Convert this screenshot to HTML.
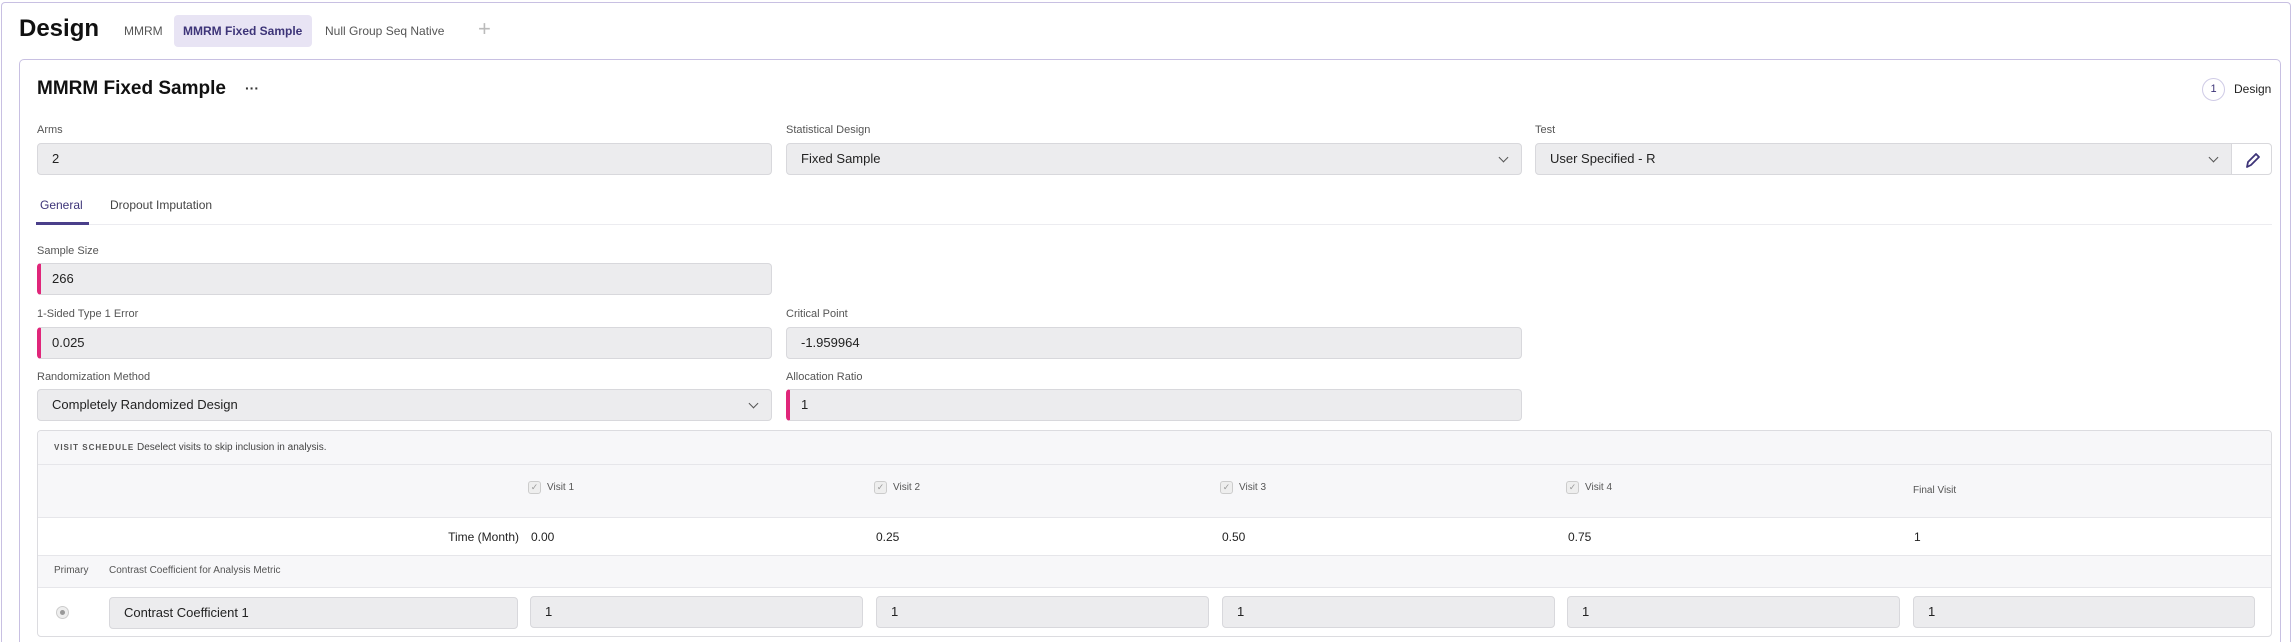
<!DOCTYPE html>
<html><head><style>
*{box-sizing:border-box;margin:0;padding:0}
html,body{width:2293px;height:642px;overflow:hidden}
body{background:#fff;font-family:"Liberation Sans",sans-serif;color:#222}
#w{position:relative;width:2293px;height:642px;overflow:hidden}
.a{position:absolute;white-space:nowrap}
.lbl{font-size:11px;color:#555}
.inp{position:absolute;height:32px;background:#ececee;border:1px solid #d8d8dc;border-radius:4px;font-size:13px;line-height:30px;padding-left:14px;color:#222}
.pk{border-left:4px solid #e0267a;padding-left:11px}
.chev{position:absolute;right:14px;top:10px;width:7px;height:7px;border-right:1.3px solid #555;border-bottom:1.3px solid #555;transform:rotate(45deg)}
.cb{display:inline-block;width:13px;height:13px;border:1px solid #ccc;border-radius:3px;background:#eee;vertical-align:middle;margin-right:6px;font-size:9px;line-height:11px;text-align:center;color:#999}
</style></head><body><div id="w">
<div class="a" style="left:1px;top:2px;width:2290px;height:640px;border:1px solid #c8c0e2;border-bottom:none;border-radius:4px 4px 0 0"></div>
<div class="a" style="left:19px;top:15px;font-size:24px;font-weight:bold;color:#111">Design</div>
<div class="a" style="left:124px;top:24px;font-size:12px;color:#555">MMRM</div>
<div class="a" style="left:174px;top:15px;width:138px;height:32px;background:#e8e4f4;border-radius:4px"></div>
<div class="a" style="left:183px;top:24px;font-size:12px;color:#3d3478;font-weight:bold">MMRM Fixed Sample</div>
<div class="a" style="left:325px;top:24px;font-size:12px;color:#555">Null Group Seq Native</div>
<div class="a" style="left:478px;top:16px;font-size:22px;color:#bbb">+</div>
<div class="a" style="left:19px;top:59px;width:2262px;height:583px;border:1px solid #c8c0e2;border-bottom:none;border-radius:5px 5px 0 0"></div>
<div class="a" style="left:37px;top:78px;font-size:19px;font-weight:bold;color:#111">MMRM Fixed Sample</div>
<div class="a" style="left:245px;top:80px;font-size:14px;color:#333;font-weight:bold">···</div>
<div class="a" style="left:2202px;top:78px;width:23px;height:23px;border:1px solid #cfcbe6;border-radius:50%;font-size:11px;text-align:center;line-height:21px;color:#3d3478">1</div>
<div class="a" style="left:2234px;top:82px;font-size:12px;color:#222">Design</div>
<div class="a lbl" style="left:37px;top:124px">Arms</div>
<div class="a lbl" style="left:786px;top:124px">Statistical Design</div>
<div class="a lbl" style="left:1535px;top:124px">Test</div>
<div class="inp" style="left:37px;top:143px;width:735px">2</div>
<div class="inp" style="left:786px;top:143px;width:736px">Fixed Sample<div class="chev"></div></div>
<div class="inp" style="left:1535px;top:143px;width:697px;border-radius:4px 0 0 4px">User Specified - R<div class="chev"></div></div>
<div class="a" style="left:2231px;top:143px;width:41px;height:32px;border:1px solid #d8d8dc;border-radius:0 4px 4px 0;background:#fff">
<svg width="41" height="32"><path d="M15 23 L16 18 L24 10 L27 13 L19 21 Z" fill="none" stroke="#3d3478" stroke-width="1.8" stroke-linejoin="round"/></svg></div>
<div class="a" style="left:40px;top:198px;font-size:12px;color:#3d3478">General</div>
<div class="a" style="left:110px;top:198px;font-size:12px;color:#444">Dropout Imputation</div>
<div class="a" style="left:37px;top:224px;width:2235px;height:1px;background:#ececf0"></div>
<div class="a" style="left:36px;top:222px;width:53px;height:3px;background:#4a3f8a"></div>
<div class="a lbl" style="left:37px;top:245px">Sample Size</div>
<div class="inp pk" style="left:37px;top:263px;width:735px">266</div>
<div class="a lbl" style="left:37px;top:308px">1-Sided Type 1 Error</div>
<div class="inp pk" style="left:37px;top:327px;width:735px">0.025</div>
<div class="a lbl" style="left:786px;top:308px">Critical Point</div>
<div class="inp" style="left:786px;top:327px;width:736px">-1.959964</div>
<div class="a lbl" style="left:37px;top:371px">Randomization Method</div>
<div class="inp" style="left:37px;top:389px;width:735px">Completely Randomized Design<div class="chev"></div></div>
<div class="a lbl" style="left:786px;top:371px">Allocation Ratio</div>
<div class="inp pk" style="left:786px;top:389px;width:736px">1</div>
<div class="a" style="left:37px;top:430px;width:2235px;height:207px;border:1px solid #dcdce0;border-radius:4px;overflow:hidden">
 <div class="a" style="left:0;top:0;width:100%;height:34px;background:#f7f7f9;border-bottom:1px solid #e6e6ea"></div>
 <div class="a" style="left:16px;top:11px;font-size:10px;color:#444"><span style="font-size:8px;letter-spacing:1px;font-weight:bold;color:#555">VISIT SCHEDULE</span> Deselect visits to skip inclusion in analysis.</div>
 <div class="a" style="left:0;top:34px;width:100%;height:53px;background:#f7f7f9;border-bottom:1px solid #e6e6ea"></div>
 <div class="a" style="left:0;top:124px;width:100%;height:33px;background:#f7f7f9;border-top:1px solid #e6e6ea;border-bottom:1px solid #e6e6ea"></div>
 <div class="a" style="left:253px;top:99px;font-size:12px;color:#222;text-align:right;width:228px">Time (Month)</div>
 <div class="a" style="left:16px;top:134px;font-size:10px;color:#555">Primary</div>
 <div class="a" style="left:71px;top:134px;font-size:10px;color:#555">Contrast Coefficient for Analysis Metric</div>
 <div class="a" style="left:18px;top:175px;width:13px;height:13px;border-radius:50%;border:1px solid #ccc;background:#eee"><div style="margin:3px;width:5px;height:5px;border-radius:50%;background:#999"></div></div>
 <div class="inp" style="left:71px;top:166px;width:409px;height:32px">Contrast Coefficient 1</div>
</div>
<div class="a" style="left:528px;top:481px;font-size:10px;color:#555"><span class="cb">✓</span>Visit 1</div>
<div class="a" style="left:874px;top:481px;font-size:10px;color:#555"><span class="cb">✓</span>Visit 2</div>
<div class="a" style="left:1220px;top:481px;font-size:10px;color:#555"><span class="cb">✓</span>Visit 3</div>
<div class="a" style="left:1566px;top:481px;font-size:10px;color:#555"><span class="cb">✓</span>Visit 4</div>
<div class="a" style="left:1913px;top:485px;font-size:10px;color:#555">Final Visit</div>
<div class="a" style="left:531px;top:530px;font-size:12px">0.00</div>
<div class="a" style="left:876px;top:530px;font-size:12px">0.25</div>
<div class="a" style="left:1222px;top:530px;font-size:12px">0.50</div>
<div class="a" style="left:1568px;top:530px;font-size:12px">0.75</div>
<div class="a" style="left:1914px;top:530px;font-size:12px">1</div>
<div class="inp" style="left:530px;top:596px;width:333px">1</div>
<div class="inp" style="left:876px;top:596px;width:333px">1</div>
<div class="inp" style="left:1222px;top:596px;width:333px">1</div>
<div class="inp" style="left:1567px;top:596px;width:333px">1</div>
<div class="inp" style="left:1913px;top:596px;width:342px">1</div>
</div></body></html>
